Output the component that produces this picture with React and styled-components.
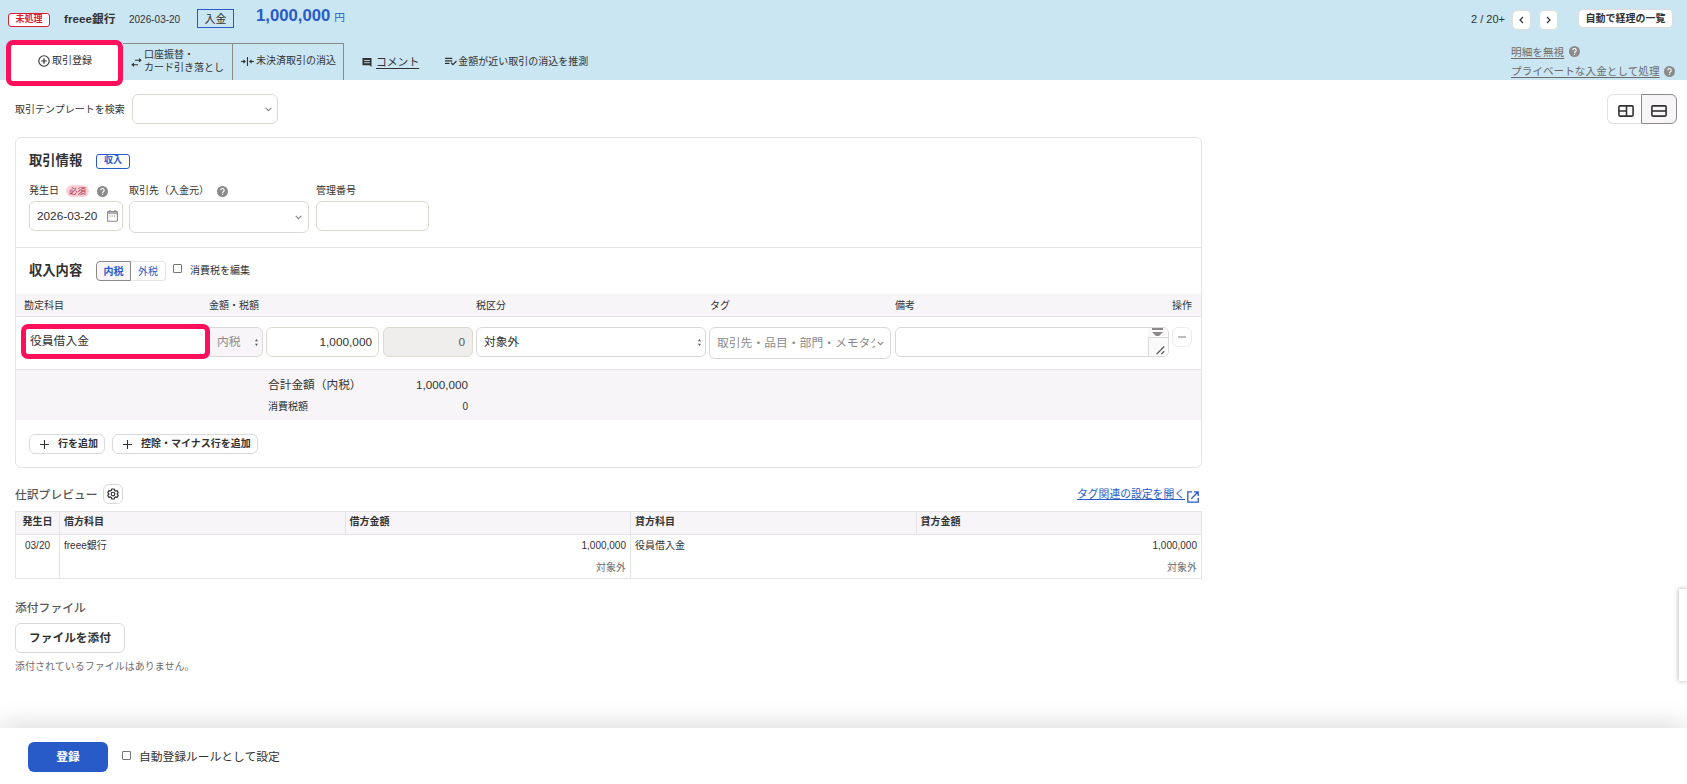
import styled, { createGlobalStyle } from "styled-components";

const GlobalStyle = createGlobalStyle`
  *, *::before, *::after {
    box-sizing: border-box;
  }
  body {
    margin: 0;
    background: #fff;
    color: #323232;
    font-family: "Liberation Sans", "Noto Sans CJK JP", sans-serif;
    font-size: 10px;
    line-height: 14px;
    overflow: hidden;
  }
  button, input {
    font-family: inherit;
    margin: 0;
    padding: 0;
  }
  svg {
    display: block;
    flex: none;
  }
`;

const Page = styled.div`
  height: 784px;
  display: flex;
  flex-direction: column;
  position: relative;
  white-space: nowrap;
`;

/* ---------- header ---------- */
const Header = styled.header`
  height: 80px;
  flex: none;
  background: #cae6f2;
  display: flex;
  justify-content: space-between;
`;

const HeaderLeft = styled.div`
  display: flex;
  flex-direction: column;
`;

const Summary = styled.div`
  height: 43px;
  display: flex;
  align-items: flex-start;
  padding-left: 8px;
  .bank {
    margin: 11px 0 0 14px;
    width: 48px;
    font-size: 11.7px;
    font-weight: 700;
    line-height: 16px;
  }
  .date {
    margin: 13px 0 0 17px;
    width: 51px;
  }
  .type {
    margin: 9px 0 0 17px;
    width: 37px;
    height: 19px;
    border: 1px solid #285ac8;
    font-size: 11px;
    line-height: 19px;
    text-align: center;
  }
  .amount {
    margin: 5px 0 0 22px;
    color: #285ac8;
    font-size: 16.7px;
    font-weight: 700;
    line-height: 22px;
  }
  .amount span {
    font-size: 10.7px;
    font-weight: 400;
    margin-left: 4px;
  }
`;

const StatusBadge = styled.span`
  margin-top: ${(p) => p.$top || 0}px;
  width: ${(p) => p.$width}px;
  height: ${(p) => p.$height || 14}px;
  border: 1px solid ${(p) => p.$color};
  border-radius: 3px;
  background: #fff;
  color: ${(p) => p.$color};
  font-size: 9px;
  font-weight: 700;
  line-height: ${(p) => (p.$height || 14) - 4}px;
  text-align: center;
`;

const Tabs = styled.nav`
  height: 37px;
  display: flex;
`;

const Tab = styled.div`
  width: ${(p) => p.$width}px;
  height: 37px;
  display: flex;
  align-items: center;
  padding-left: ${(p) => p.$pad}px;
  padding-bottom: ${(p) => p.$bottom || 0}px;
  gap: ${(p) => p.$gap || 2}px;
  border: solid #8c8989;
  border-width: 1px 1px 0 0;
  line-height: 12.6px;
`;

const ActiveTab = styled(Tab)`
  position: relative;
  margin-left: 8px;
  background: #fff;
  border: 0;
  &::after {
    content: "";
    position: absolute;
    left: -2px;
    top: -3px;
    width: 117px;
    height: 46px;
    border: 5px solid #ff0f5c;
    border-radius: 7px;
    background: #fff;
    z-index: 1;
  }
  > * {
    position: relative;
    z-index: 2;
  }
`;

const TabLink = styled.div`
  display: flex;
  align-items: center;
  gap: ${(p) => p.$gap}px;
  margin-left: ${(p) => p.$left}px;
  padding-top: ${(p) => p.$top || 0}px;
  u {
    font-size: 10.8px;
    text-underline-offset: 2px;
  }
`;

const HeaderRight = styled.div`
  width: 217px;
  .pager {
    display: flex;
    align-items: flex-start;
    height: 42px;
    padding-top: 9px;
    font-size: 11px;
  }
  .count {
    width: 42px;
    padding: 3px 0 0 1px;
  }
`;

const PagerButton = styled.button`
  width: 19px;
  height: 20px;
  margin: 1px 8px 0 0;
  display: flex;
  align-items: center;
  justify-content: center;
  border: 1px solid #dfdcdc;
  border-radius: 5px;
  background: #fff;
`;

const ListButton = styled.button`
  width: 95px;
  height: 19px;
  margin-left: 12px;
  border: 1px solid #dfdcdc;
  border-radius: 5px;
  background: #fff;
  color: #323232;
  font-size: 10px;
  font-weight: 700;
  line-height: 16px;
`;

const SubLink = styled.div`
  display: flex;
  align-items: center;
  gap: ${(p) => p.$gap || 5}px;
  height: 19.5px;
  margin-left: 41px;
  color: #6e6b6b;
  font-size: 10.65px;
  u {
    text-underline-offset: 2px;
  }
`;

/* ---------- shared form parts ---------- */
const Field = styled.div`
  width: ${(p) => p.$width}px;
  height: ${(p) => p.$height || 30}px;
  flex: none;
  display: flex;
  align-items: center;
  justify-content: ${(p) => (p.$right ? "flex-end" : "space-between")};
  padding: 0 ${(p) => p.$pr ?? 7}px 0 ${(p) => p.$pl ?? 7}px;
  border: 1px solid ${(p) => p.$border || "#d9d9d9"};
  border-radius: 6px;
  background: ${(p) => p.$bg || "#fff"};
  color: ${(p) => p.$color || "#323232"};
  font-size: 11.8px;
  overflow: hidden;
`;

const Checkbox = styled.input.attrs({ type: "checkbox" })`
  appearance: none;
  width: 9px;
  height: 9px;
  flex: none;
  border: 1px solid #767676;
  border-radius: 1px;
  background: #fff;
`;

const SmallButton = styled.button`
  width: ${(p) => p.$width}px;
  height: 20px;
  display: flex;
  align-items: center;
  gap: 9px;
  padding-left: 10px;
  border: 1px solid #d9d9d9;
  border-radius: 6px;
  background: #fff;
  color: #323232;
  font-size: 10px;
  font-weight: 700;
  line-height: 16px;
  span {
    padding-bottom: 1px;
  }
`;

const IconButton = styled.button`
  width: 20px;
  height: 20px;
  display: flex;
  align-items: center;
  justify-content: center;
  border: 1px solid ${(p) => p.$border || "#d9d9d9"};
  border-radius: 6px;
  background: #fff;
`;

/* ---------- template search ---------- */
const Toolbar = styled.div`
  height: 57px;
  flex: none;
  display: flex;
  padding: 14px 10px 0 15px;
  label {
    width: 117px;
    line-height: 31px;
  }
`;

const LayoutToggle = styled.div`
  display: flex;
  margin-left: auto;
  div {
    width: 34px;
    height: 30px;
    display: flex;
    align-items: center;
    justify-content: center;
    padding: 3px 0 0 2px;
    border: 1px solid #e1e1e1;
    border-right: 0;
    border-radius: 6px 0 0 6px;
  }
  div:last-child {
    width: 36px;
    padding-left: 0;
    border: 1px solid #8c8989;
    border-radius: 0 6px 6px 0;
    background: #f7f5f7;
  }
`;

/* ---------- deal card ---------- */
const Card = styled.section`
  width: 1187px;
  height: 331px;
  flex: none;
  margin-left: 15px;
  border: 1px solid #e4e4e4;
  border-radius: 6px;
`;

const DealInfo = styled.div`
  height: 110px;
  padding: 16px 0 0 13px;
  border-bottom: 1px solid #e4e4e4;
`;

const Heading = styled.div`
  display: flex;
  align-items: flex-start;
  h2 {
    width: 67px;
    margin: -1px 0 0;
    font-size: 13.3px;
    font-weight: 700;
    line-height: 15px;
  }
`;

const FieldRow = styled.div`
  display: flex;
  margin-top: 15px;
`;

const FieldGroup = styled.div`
  width: ${(p) => p.$width}px;
  .label {
    height: 17px;
    display: flex;
    align-items: center;
    padding-bottom: 4px;
  }
  .label svg {
    margin: 2px 0 0 ${(p) => p.$icon || 0}px;
  }
`;

const Required = styled.span`
  width: 23px;
  height: 12px;
  margin-left: 7px;
  border-radius: 6px;
  background: #fad2d7;
  color: #b4283c;
  font-size: 8.5px;
  line-height: 12px;
  text-align: center;
`;

const DetailHead = styled.div`
  height: 46px;
  display: flex;
  align-items: flex-start;
  padding: 13px 0 0 13px;
  h2 {
    width: 67px;
    margin: 2px 0 0;
    font-size: 13.3px;
    line-height: 15px;
  }
  input {
    margin: 3px 8px 0 7px;
  }
  label {
    padding-top: 3px;
  }
`;

const TaxToggle = styled.div`
  display: flex;
  color: #285ac8;
  line-height: 19px;
  text-align: center;
  span {
    width: 35px;
    height: 20px;
    border: 1px solid #e4e4e4;
    border-left: 0;
    border-radius: 0 4px 4px 0;
  }
  span:first-child {
    border: 1px solid #8c8989;
    border-radius: 4px 0 0 4px;
    background: #f7f5f7;
    font-weight: 700;
  }
`;

const LineHeader = styled.div`
  height: 23px;
  display: grid;
  grid-template-columns: 185px 267px 234px 185px 277px 1fr;
  padding-left: 8px;
  border-bottom: 1px solid #e4e4e4;
  background: #f7f5f7;
  line-height: 23px;
`;

const LineRow = styled.div`
  height: 53px;
  display: flex;
  align-items: flex-start;
  padding: 10px 0 0 5px;
  border-bottom: 1px solid #e4e4e4;
`;

const AccountField = styled.div`
  width: 189px;
  height: 35px;
  margin: -3px -5px 0 0;
  padding-left: 4px;
  position: relative;
  z-index: 1;
  border: 5px solid #ff0f5c;
  border-radius: 7px;
  background: #fff;
  font-size: 11.8px;
  line-height: 24px;
`;

const Lines = styled.div`
  display: flex;
  .tax-type { margin-right: 3px; }
  .amount { margin-right: 4px; }
  .tax { margin-right: 3px; }
  .category { margin-right: 3px; }
  .tag { margin-right: 4px; }
  .memo { margin-right: 3px; }
`;

const ClipText = styled.span`
  width: ${(p) => p.$width}px;
  overflow: hidden;
`;

const MemoCorner = styled.div`
  width: 20px;
  height: 30px;
  flex: none;
  background: #fafafa;
  svg + svg {
    border-top: 1px solid #d9d9d9;
    border-left: 1px solid #d9d9d9;
  }
`;

const Totals = styled.div`
  height: 50px;
  padding: 6px 0 0 252px;
  background: #f7f5f7;
  div {
    width: 200px;
    display: flex;
    justify-content: space-between;
    font-size: 11.7px;
    line-height: 17px;
  }
  div + div {
    margin-top: 5px;
    font-size: 10px;
  }
`;

const AddButtons = styled.div`
  display: flex;
  gap: 7px;
  padding: 14px 0 0 13px;
`;

/* ---------- journal preview ---------- */
const PreviewHead = styled.div`
  width: 1187px;
  height: 43px;
  flex: none;
  margin-left: 15px;
  padding: 16px 3px 0 0;
  display: flex;
  align-items: flex-start;
  h3 {
    width: 88px;
    margin: 0;
    color: #595757;
    font-size: 11.8px;
    font-weight: 500;
    line-height: 22px;
  }
  a {
    display: flex;
    gap: 2px;
    margin-left: auto;
    color: #285ac8;
    font-size: 10.8px;
    line-height: 21px;
    text-decoration: underline;
    text-underline-offset: 1px;
  }
  a svg {
    margin-top: 7px;
  }
`;

const Journal = styled.table`
  width: 1187px;
  margin-left: 15px;
  border-collapse: collapse;
  table-layout: fixed;
  th, td {
    border: 1px solid #e4e4e4;
    padding: 0 4px;
    text-align: left;
  }
  th {
    height: 23px;
    padding-bottom: 2px;
    background: #f7f5f7;
    line-height: 20px;
  }
  th:first-child, td:first-child {
    text-align: center;
  }
  td {
    height: 44px;
    padding-top: 4px;
    vertical-align: top;
    line-height: 14px;
  }
  td:nth-child(3), td:nth-child(5) {
    text-align: right;
    border-left: 0;
  }
  td:nth-child(2), td:nth-child(4) {
    border-right: 0;
  }
  small {
    display: block;
    margin-top: 8px;
    color: #6e6b6b;
    font-size: 10px;
  }
`;

const Attachments = styled.div`
  padding: 20px 0 0 15px;
  h3 {
    margin: 0;
    color: #595757;
    font-size: 11.8px;
    font-weight: 500;
    line-height: 18px;
  }
  button {
    width: 110px;
    height: 30px;
    margin-top: 6px;
    padding-bottom: 4px;
    border: 1px solid #d9d9d9;
    border-radius: 6px;
    background: #fff;
    color: #323232;
    font-size: 11.7px;
    font-weight: 700;
  }
  p {
    margin: 7px 0 0;
    color: #6e6b6b;
  }
`;

/* ---------- footer ---------- */
const Footer = styled.footer`
  height: 56px;
  flex: none;
  margin-top: auto;
  display: flex;
  align-items: flex-start;
  padding: 14px 0 0 28px;
  background: #fff;
  box-shadow: 0 -4px 26px rgba(0, 0, 0, 0.14);
  button {
    width: 80px;
    height: 30px;
    padding-bottom: 4px;
    border: 0;
    border-radius: 6px;
    background: #285ac8;
    color: #fff;
    font-size: 11.7px;
    font-weight: 700;
  }
  input {
    margin: 9px 8px 0 14px;
  }
  label {
    font-size: 11.75px;
    line-height: 30px;
  }
`;

const SidePanel = styled.div`
  position: absolute;
  top: 589px;
  right: 0;
  width: 8px;
  height: 92px;
  background: #fff;
  box-shadow: 0 0 5px rgba(0, 0, 0, 0.35);
`;

const HelpIcon = () => (
  <svg width="11" height="11" viewBox="0 0 11 11">
    <circle cx="5.5" cy="5.5" r="5.5" fill="#8c8989" />
    <path d="M3.8 4.3a1.7 1.7 0 1 1 2.6 1.4c-.6.4-.9.6-.9 1.2" fill="none" stroke="#fff" strokeWidth="1.1" />
    <rect x="4.9" y="7.7" width="1.2" height="1.2" fill="#fff" />
  </svg>
);

const ChevronIcon = () => (
  <svg width="7" height="5" viewBox="0 0 7 5">
    <path d="M.7.8l2.8 2.8L6.3.8" fill="none" stroke="#8c8989" strokeWidth="1.2" />
  </svg>
);

const SortIcon = () => (
  <svg width="3" height="7" viewBox="0 0 3 7" fill="#595757">
    <path d="M0 2.2L1.5 0 3 2.2zM0 4.8L1.5 7 3 4.8z" />
  </svg>
);

const ArrowIcon = ({ left }) => (
  <svg width="5" height="8" viewBox="0 0 5 8">
    <path d={left ? "M4 1L1 4l3 3" : "M1 1l3 3-3 3"} fill="none" stroke="#323232" strokeWidth="1.2" />
  </svg>
);

const PlusIcon = () => (
  <svg width="9" height="9" viewBox="0 0 9 9">
    <path d="M4.5 0v9M0 4.5h9" stroke="#323232" strokeWidth="1.1" />
  </svg>
);

const CirclePlusIcon = () => (
  <svg width="12" height="12" viewBox="0 0 12 12" fill="none" stroke="#323232">
    <circle cx="6" cy="6" r="5.2" strokeWidth="1.1" />
    <path d="M6 3.2v5.6M3.2 6h5.6" strokeWidth="1.2" />
  </svg>
);

const SwapIcon = () => (
  <svg width="11" height="9" viewBox="0 0 11 9">
    <path d="M4 2.3h4.5M2.5 6.7H7" stroke="#323232" strokeWidth="1.1" />
    <path d="M8 0l2.7 2.3L8 4.6zM3 4.4L.3 6.7 3 9z" fill="#323232" />
  </svg>
);

const MatchIcon = () => (
  <svg width="13" height="9" viewBox="0 0 13 9">
    <path d="M6.5 0v9M0 4.5h3M10 4.5h3" stroke="#323232" strokeWidth="1.1" />
    <path d="M2.4 2.3L5 4.5 2.4 6.7zM10.6 2.3L8 4.5l2.6 2.2z" fill="#323232" />
  </svg>
);

const CommentIcon = () => (
  <svg width="10" height="9" viewBox="0 0 10 9">
    <path d="M.5 0h9v9L7.6 7.3H.5z" fill="#323232" />
    <path d="M2.2 2.5h5.6M2.2 4.7h5.6" stroke="#cae6f2" strokeWidth=".9" />
  </svg>
);

const ListCheckIcon = () => (
  <svg width="12" height="9" viewBox="0 0 12 9" fill="none" stroke="#323232" strokeWidth="1.2">
    <path d="M0 1.4h7.3M0 3.9h7.3M0 6.4h4.5M6 5.7l1.9 1.9 3.6-3.6" />
  </svg>
);

const SplitIcon = ({ rows }) => (
  <svg width="16" height="12" viewBox="0 0 16 12" fill="none" stroke="#323232" strokeWidth="1.6">
    <rect x=".9" y=".9" width="14.2" height="10.2" rx="1" />
    {rows ? <path d="M1 6h14" /> : <path d="M8.5 1v10M1 6h7.5" />}
  </svg>
);

const CalendarIcon = () => (
  <svg width="11" height="12" viewBox="0 0 11 12" fill="none" stroke="#8c8989">
    <rect x=".6" y="1.6" width="9.8" height="9.6" rx=".6" strokeWidth="1.1" />
    <path d="M.6 3.2h9.8M3 0v2M8 0v2" strokeWidth="1.3" />
    <path d="M2.5 6h6" strokeWidth="1.1" strokeDasharray="1.2 1" />
  </svg>
);

const GearIcon = () => (
  <svg width="12" height="12" viewBox="0 0 24 24" fill="none" stroke="#323232" strokeWidth="2.3" strokeLinejoin="round">
    <path d="M9.5 2h5l.7 3 2 1.2 3-.9 2.4 4.1-2.2 2.1v1l2.2 2.1-2.4 4.1-3-.9-2 1.2-.7 3h-5l-.7-3-2-1.2-3 .9-2.4-4.1 2.2-2.1v-1L1.4 9.4l2.4-4.1 3 .9 2-1.2z" />
    <circle cx="12" cy="12" r="3.6" />
  </svg>
);

const OpenIcon = () => (
  <svg width="12" height="12" viewBox="0 0 12 12" fill="none" stroke="#285ac8" strokeWidth="1.3">
    <path d="M5 .8H.8v10.4h10.4V7M7 .8h4.2V5M11 1L4.3 7.7" />
  </svg>
);

export default function App() {
  return (
    <Page>
      <GlobalStyle />
      <Header>
        <HeaderLeft>
          <Summary>
            <StatusBadge $top={13} $width={42} $color="#dc1e32">未処理</StatusBadge>
            <div className="bank">freee銀行</div>
            <div className="date">2026-03-20</div>
            <div className="type">入金</div>
            <div className="amount">1,000,000<span>円</span></div>
          </Summary>
          <Tabs>
            <ActiveTab $width={115} $pad={30} $bottom={1}>
              <CirclePlusIcon />
              <span>取引登録</span>
            </ActiveTab>
            <Tab $width={110} $pad={8}>
              <SwapIcon />
              <span>口座振替・<br />カード引き落とし</span>
            </Tab>
            <Tab $width={111} $pad={8} $bottom={2}>
              <MatchIcon />
              <span>未決済取引の消込</span>
            </Tab>
            <TabLink $left={18} $gap={4} $top={1}>
              <CommentIcon />
              <u>コメント</u>
            </TabLink>
            <TabLink $left={26} $gap={1}>
              <ListCheckIcon />
              <span>金額が近い取引の消込を推測</span>
            </TabLink>
          </Tabs>
        </HeaderLeft>
        <HeaderRight>
          <div className="pager">
            <span className="count">2 / 20+</span>
            <PagerButton><ArrowIcon left /></PagerButton>
            <PagerButton><ArrowIcon /></PagerButton>
            <ListButton>自動で経理の一覧</ListButton>
          </div>
          <SubLink><u>明細を無視</u><HelpIcon /></SubLink>
          <SubLink $gap={4}><u>プライベートな入金として処理</u><HelpIcon /></SubLink>
        </HeaderRight>
      </Header>

      <Toolbar>
        <label>取引テンプレートを検索</label>
        <Field $width={146} $border="#dcdad0" $pr={5}><span /><ChevronIcon /></Field>
        <LayoutToggle>
          <div><SplitIcon /></div>
          <div><SplitIcon rows /></div>
        </LayoutToggle>
      </Toolbar>

      <Card>
        <DealInfo>
          <Heading>
            <h2>取引情報</h2>
            <StatusBadge $width={34} $height={15} $color="#285ac8">収入</StatusBadge>
          </Heading>
          <FieldRow>
            <FieldGroup $width={100} $icon={8}>
              <div className="label">発生日<Required>必須</Required><HelpIcon /></div>
              <Field $width={94} $border="#dcdad0" $pr={4}>2026-03-20<CalendarIcon /></Field>
            </FieldGroup>
            <FieldGroup $width={187} $icon={8}>
              <div className="label">取引先（入金元）<HelpIcon /></div>
              <Field $width={180} $height={32} $pr={6}><span /><ChevronIcon /></Field>
            </FieldGroup>
            <FieldGroup $width={113}>
              <div className="label">管理番号</div>
              <Field $width={113} $border="#dcdad0" />
            </FieldGroup>
          </FieldRow>
        </DealInfo>

        <DetailHead>
          <h2>収入内容</h2>
          <TaxToggle><span>内税</span><span>外税</span></TaxToggle>
          <Checkbox />
          <label>消費税を編集</label>
        </DetailHead>
        <LineHeader>
          <span>勘定科目</span>
          <span>金額・税額</span>
          <span>税区分</span>
          <span>タグ</span>
          <span>備考</span>
          <span>操作</span>
        </LineHeader>
        <LineRow>
          <AccountField>役員借入金</AccountField>
          <Lines>
            <Field className="tax-type" $width={58} $bg="#f7f5f7" $color="#8c8989" $pl={11} $pr={4}>内税<SortIcon /></Field>
            <Field className="amount" $width={113} $right $border="#dcdad0" $pr={6}>1,000,000</Field>
            <Field className="tax" $width={90} $right $bg="#f0eeec" $border="#dcdad0" $color="#595757">0</Field>
            <Field className="category" $width={230} $pr={4}>対象外<SortIcon /></Field>
            <Field className="tag" $width={182} $height={32} $color="#8c8989" $pr={6}>
              <ClipText $width={158}>取引先・品目・部門・メモタグ</ClipText>
              <ChevronIcon />
            </Field>
            <Field className="memo" $width={274} $pr={0}>
              <span />
              <MemoCorner>
                <svg width="20" height="10" viewBox="0 0 20 10" fill="#8c8989">
                  <path d="M4 1h11v2H4zM4 5h11l-4 4H8z" />
                </svg>
                <svg width="20" height="19" viewBox="0 0 20 19" fill="none" stroke="#595757" strokeWidth="1.4">
                  <path d="M8 17l8-8M13 17l3-3" />
                </svg>
              </MemoCorner>
            </Field>
            <IconButton $border="#ebebeb">
              <svg width="8" height="2"><path d="M0 1h8" stroke="#bebcbc" strokeWidth="2" /></svg>
            </IconButton>
          </Lines>
        </LineRow>
        <Totals>
          <div><span>合計金額（内税）</span><span>1,000,000</span></div>
          <div><span>消費税額</span><span>0</span></div>
        </Totals>
        <AddButtons>
          <SmallButton $width={76}><PlusIcon /><span>行を追加</span></SmallButton>
          <SmallButton $width={146}><PlusIcon /><span>控除・マイナス行を追加</span></SmallButton>
        </AddButtons>
      </Card>

      <PreviewHead>
        <h3>仕訳プレビュー</h3>
        <IconButton><GearIcon /></IconButton>
        <a>タグ関連の設定を開く<OpenIcon /></a>
      </PreviewHead>
      <Journal>
        <colgroup>
          <col style={{ width: 44 }} />
          <col span={4} />
        </colgroup>
        <thead>
          <tr>
            <th>発生日</th>
            <th>借方科目</th>
            <th>借方金額</th>
            <th>貸方科目</th>
            <th>貸方金額</th>
          </tr>
        </thead>
        <tbody>
          <tr>
            <td>03/20</td>
            <td>freee銀行</td>
            <td>1,000,000<small>対象外</small></td>
            <td>役員借入金</td>
            <td>1,000,000<small>対象外</small></td>
          </tr>
        </tbody>
      </Journal>

      <Attachments>
        <h3>添付ファイル</h3>
        <button>ファイルを添付</button>
        <p>添付されているファイルはありません。</p>
      </Attachments>

      <Footer>
        <button>登録</button>
        <Checkbox />
        <label>自動登録ルールとして設定</label>
      </Footer>
      <SidePanel />
    </Page>
  );
}
